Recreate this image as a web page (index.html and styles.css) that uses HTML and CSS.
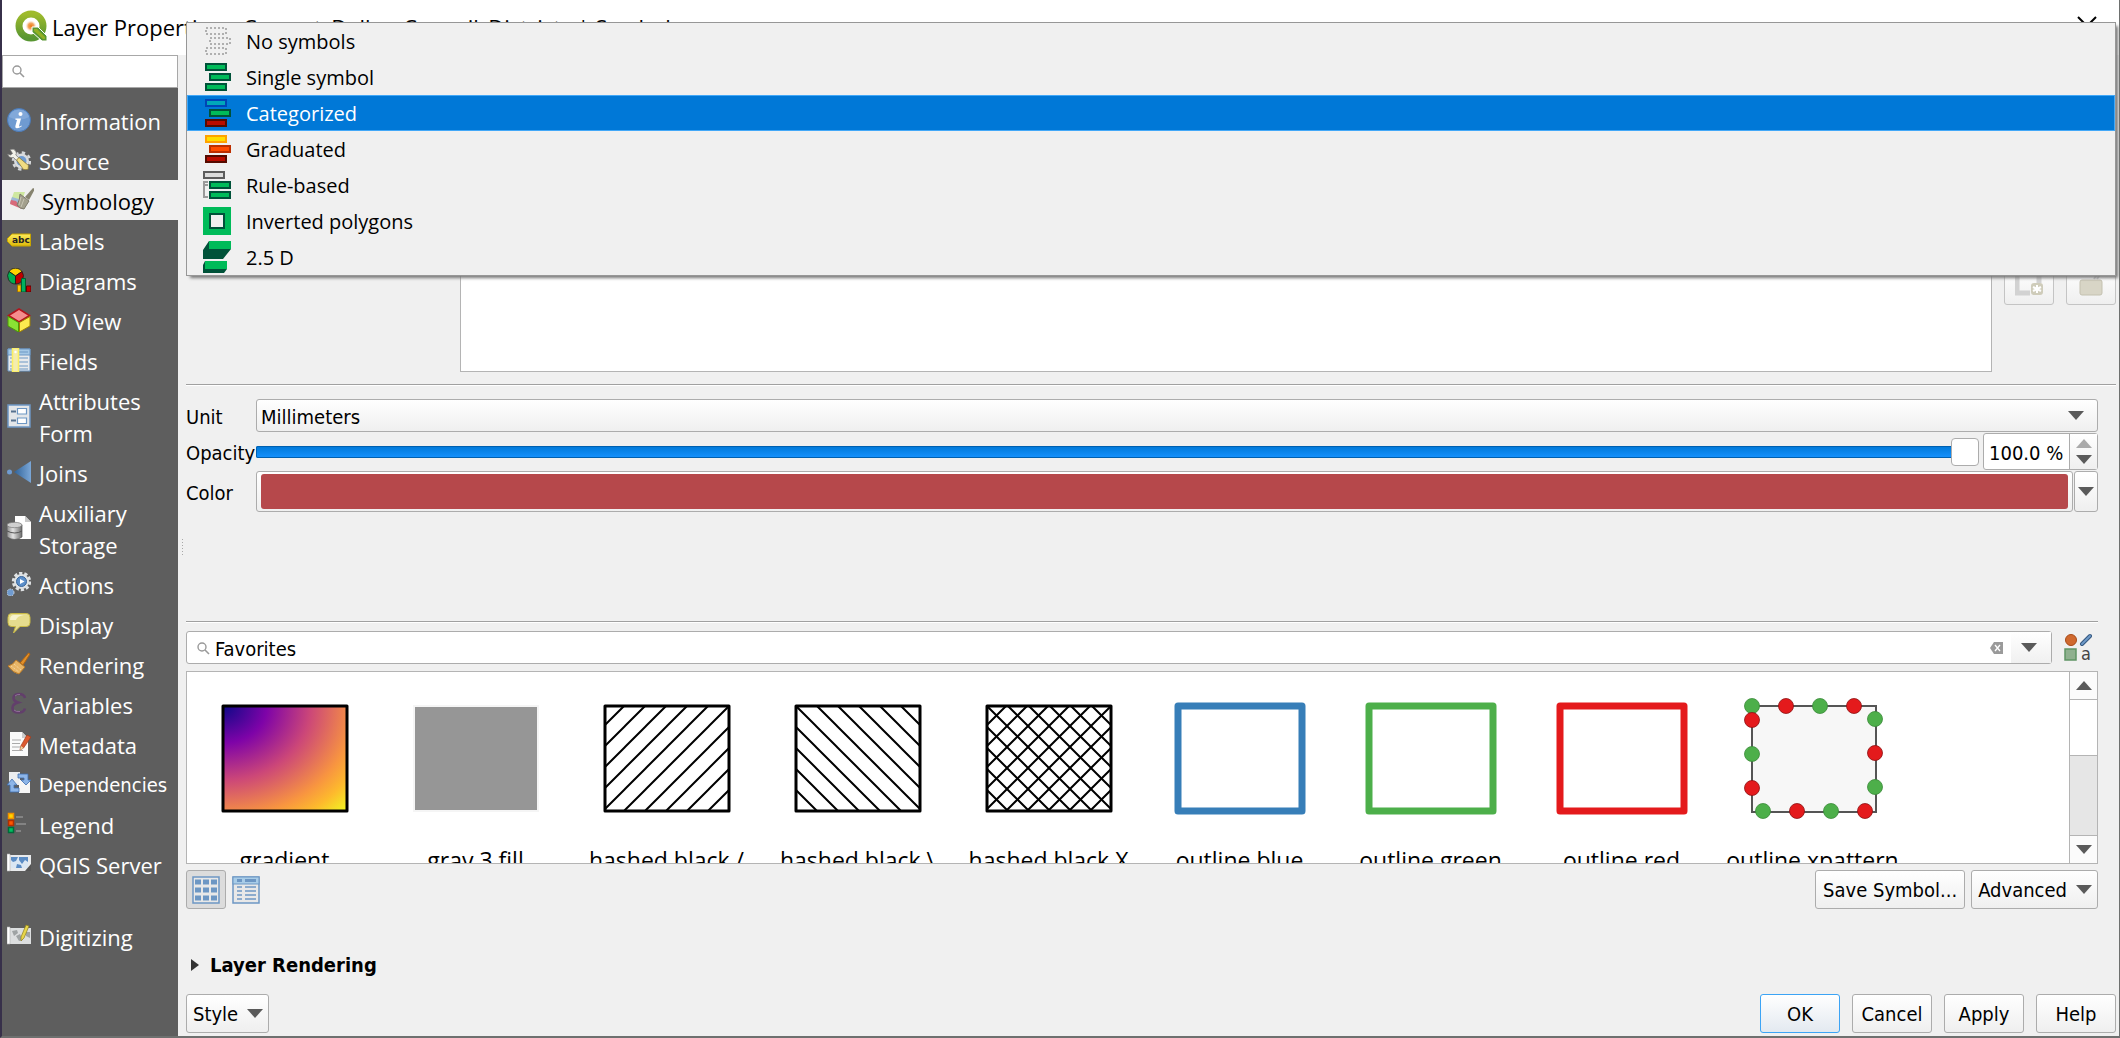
FILE: index.html
```html
<!DOCTYPE html>
<html lang="en">
<head>
<meta charset="utf-8">
<title>Layer Properties</title>
<link rel="stylesheet" href="styles.css">
</head>
<body>
<div class="dialog">
  <header class="titlebar">
    <svg class="logo" width="32" height="32" viewBox="0 0 32 32" aria-hidden="true">
      <defs>
        <linearGradient id="ring" x1="0" y1="0" x2="0" y2="1"><stop offset="0" stop-color="#9fbb2c"/><stop offset="1" stop-color="#589632"/></linearGradient>
        <radialGradient id="core"><stop offset="0" stop-color="#ee7913"/><stop offset="0.5" stop-color="#f3a763"/><stop offset="1" stop-color="#fff" stop-opacity="0"/></radialGradient>
      </defs>
      <circle cx="16" cy="16" r="12" fill="none" stroke="url(#ring)" stroke-width="7"/>
      <circle cx="16" cy="16" r="6" fill="url(#core)"/>
      <path d="M17 17h6l9 9v5h-5L17 22z" fill="#589632" stroke="#fff" stroke-width="1"/>
      <path d="M19 19h3l8 8v2h-2l-9-8z" fill="#93b023"/>
    </svg>
    <h1 class="title">Layer Properties – Current_Dallas_Council_Districts | Symbology</h1>
    <button class="close" type="button" aria-label="Close"><svg width="20" height="20" viewBox="0 0 20 20"><path d="M1 1l18 18M19 1L1 19" stroke="#000" stroke-width="2"/></svg></button>
  </header>

  <div class="body">
    <aside class="sidebar">
      <div class="search">
        <svg width="14" height="14" viewBox="0 0 14 14" aria-hidden="true"><circle cx="6" cy="6" r="4" fill="none" stroke="#999" stroke-width="1.4"/><path d="M9 9l4 4" stroke="#999" stroke-width="1.6"/></svg>
        <input type="text" aria-label="Search options">
      </div>
      <nav class="nav">
        <a href="#information"><svg class="ico" viewBox="0 0 24 24"><circle cx="12" cy="12" r="11.5" fill="#6f9bd1" stroke="#4a7ab8"/><path d="M2 9a10.500 10.500 0 0 1 20 0q-9 5-20 0z" fill="#8fb3df" opacity=".6"/><circle cx="13.500" cy="6" r="2" fill="#fff"/><path d="M8.500 10.500h5.500l-2 7.500q0 1 2.500-.5l.3.8q-3 2.200-5 2-2-.3-1.300-2.800l1.500-5.500-1.800-.4z" fill="#fff"/></svg><span>Information</span></a>
        <a href="#source"><svg class="ico" viewBox="0 0 24 24"><circle cx="14.500" cy="13" r="8.500" fill="none" stroke="#d5d8da" stroke-width="2.500" stroke-dasharray="3.340 3.340"/><circle cx="14.500" cy="13" r="7.500" fill="#dadcde"/><circle cx="14.500" cy="13" r="5" fill="#6f9bd1"/><path d="M3 1.500q4-1.500 6 2 .8 2-.2 3.500L12 10l-2.500 2.500L6.500 9.500Q2 10.500.5 6l3 1 2-1.500z" fill="#f2f2ea" stroke="#707070" stroke-width=".7"/><path d="M9.500 12L12 9.500l9.500 8-.5 4-4.500 0z" fill="#f0dc82" stroke="#8a7a3a" stroke-width=".8"/></svg><span>Source</span></a>
        <a class="selected" href="#symbology" aria-current="page"><svg class="ico" viewBox="0 0 24 24"><path d="M4 4h11l-5 15-10-4z" fill="#cfe8a0"/><path d="M2 9l10 3-2 7-10-4z" fill="#9db9d6"/><path d="M1 12l5 1 6 8-12-5z" fill="#d86a7a"/><path d="M10 6l9 7-5 8q-4 0-7-4 3-5 3-11z" fill="#a3a08d" stroke="#7e7b6b"/><path d="M15 9l8-9 2 1-6 11z" fill="#86836f"/><path d="M11 9l-2 8M14 11l-3 8" stroke="#c8c5b4"/></svg><span>Symbology</span></a>
        <a href="#labels"><svg class="ico" viewBox="0 0 24 24"><defs><linearGradient id="tag" x1="0" y1="0" x2="0" y2="1"><stop offset="0" stop-color="#fdec5c"/><stop offset="1" stop-color="#dcb90a"/></linearGradient></defs><path d="M5 6h18.500v12H5L.5 13.500v-3z" fill="url(#tag)" stroke="#c7a500"/><text class="tag-text" x="5" y="15">abc</text></svg><span>Labels</span></a>
        <a href="#diagrams"><svg class="ico" viewBox="0 0 24 24"><g stroke="#1c1c1c" stroke-width=".8"><path d="M8.500 8L2 3.500A8 8 0 0 1 15 3.500z" fill="#ffd400"/><path d="M8.500 8L2 3.500A8 8 0 0 0 8.500 16z" fill="#00b050"/><path d="M8.500 8L15 3.500A8 8 0 0 1 8.500 16z" fill="#c00000"/></g><path d="M10.500 17h3.500v7h-3.500z" fill="#ffc800" stroke="#a07000"/><path d="M14.500 10.500h4V24h-4z" fill="#00b060" stroke="#006030"/><path d="M19.500 18H24v6h-4.500z" fill="#c00000" stroke="#600000"/></svg><span>Diagrams</span></a>
        <a href="#view3d"><svg class="ico" viewBox="0 0 24 24"><path d="M12 1l10.500 6.500L12 14 1.500 7.500z" fill="#f58d8d" stroke="#b2141c" stroke-width="1.500"/><path d="M1 8.500l10.500 6V24L1 18z" fill="#8ae234" stroke="#4e9a06"/><path d="M23 8.500l-10.500 6V24L23 18z" fill="#fce94f" stroke="#a08000"/></svg><span>3D View</span></a>
        <a href="#fields"><svg class="ico" viewBox="0 0 24 24"><path d="M1 1h22v22H1z" fill="#e8eaec" stroke="#6d97c4"/><path d="M1 1h22v6H1z" fill="#a4c8e6" stroke="#6d97c4"/><path d="M12 4h9M3 10h3m6 0h9M3 14h3m6 0h9M3 18h3m6 0h9M3 21h3m6 0h9" stroke="#6d97c4" stroke-width="1.200"/><path d="M5.500 0h6v24h-6z" fill="#f4edae" stroke="#fcf060" stroke-width="1.500"/><circle cx="8.500" cy="4" r="1.200" fill="#fff"/></svg><span>Fields</span></a>
        <a href="#attributes"><svg class="ico" viewBox="0 0 24 24"><path d="M1 1h22v22H1z" fill="#e3e6e9" stroke="#6d97c4" stroke-width="1.500"/><path d="M4 7.500h5M4 16.500h5" stroke="#56718f" stroke-width="2"/><path d="M10.500 4.500h9v5.500h-9zM10.500 14h9v5.500h-9z" fill="#fff" stroke="#6d97c4" stroke-width="1.200"/></svg><span>Attributes Form</span></a>
        <a href="#joins"><svg class="ico" viewBox="0 0 24 24"><defs><linearGradient id="join"><stop offset="0" stop-color="#2f6298"/><stop offset="1" stop-color="#7ba7d7"/></linearGradient></defs><circle cx="2.500" cy="12" r="2.500" fill="#6f9bd1"/><path d="M7 12L24 1v22z" fill="url(#join)"/></svg><span>Joins</span></a>
        <a href="#auxiliary"><svg class="ico" viewBox="0 0 24 24"><defs><linearGradient id="drum"><stop offset="0" stop-color="#8b8b8b"/><stop offset=".4" stop-color="#e4e4e4"/><stop offset="1" stop-color="#6c6c6c"/></linearGradient></defs><path d="M8 0h10l6 6v17H8z" fill="#fff"/><path d="M18 0l6 6h-6z" fill="#c8c8c8"/><path d="M0 9v12q8 5 15 0V9z" fill="url(#drum)" stroke="#555" stroke-width=".7"/><path d="M0 15q8 4 15 0" fill="none" stroke="#555"/><ellipse cx="7.500" cy="9" rx="7.500" ry="2.700" fill="#d0d0d0" stroke="#777" stroke-width=".7"/></svg><span>Auxiliary Storage</span></a>
        <a href="#actions"><svg class="ico" viewBox="0 0 24 24"><circle cx="14.500" cy="9.500" r="8.200" fill="none" stroke="#dfe2e4" stroke-width="3" stroke-dasharray="3.200 1.950"/><circle cx="14.500" cy="9.500" r="7.500" fill="#dfe2e4"/><circle cx="14.500" cy="9.500" r="5" fill="#5c8fca" stroke="#38659a"/><path d="M13 7l4.500 2.500L13 12z" fill="#fff"/><circle cx="3.500" cy="20.500" r="3.500" fill="#6f9bd1" stroke="#d0d6dc" stroke-dasharray="1.500 1"/></svg><span>Actions</span></a>
        <a href="#display"><svg class="ico" viewBox="0 0 24 24"><path d="M4.500 1.500h15q3.500 0 3.500 4v5q0 4-3.500 4H13L6.500 21l2-6.500h-4q-3.500 0-3.500-4v-5q0-4 3.500-4z" fill="#e6dd8e" stroke="#c9ba45"/><path d="M3 8q0-5 4-5h10q-7 1-8 5z" fill="#f6f2cc"/></svg><span>Display</span></a>
        <a href="#rendering"><svg class="ico" viewBox="0 0 24 24"><path d="M13 11L21.500 1l1.500 1-7 11z" fill="#e0902a" stroke="#b4640e"/><path d="M9 8l9 7-6 7q-6-1-11-8 5-1 8-6z" fill="#e8b566" stroke="#b97a28"/><path d="M4 14l8 6M7 12l7 6" stroke="#f7dcae" stroke-dasharray="1 1"/></svg><span>Rendering</span></a>
        <a href="#variables"><svg class="ico" viewBox="0 0 24 24"><path d="M18 6q-1-4-6-4-5.500 0-5.500 4 0 3 4.500 4.500Q5.500 12 5.500 16q0 4.500 6 4.500 5.500 0 6.500-4" fill="none" stroke="#623f6b" stroke-width="2.600"/><path d="M8 4q2-2 5-1.500M7 18q2 2 6 1.500" fill="none" stroke="#9a7aa3" stroke-width=".8"/></svg><span>Variables</span></a>
        <a href="#metadata"><svg class="ico" viewBox="0 0 24 24"><path d="M3 0h12l6 6v18H3z" fill="#fafafa"/><path d="M15 0l6 6h-6z" fill="#ccc"/><path d="M5 8h9M5 11.500h8M5 15h8M5 18.500h11" stroke="#aaa" stroke-width="1.200"/><path d="M20 3l4 2-7.500 11-3.500 2 .8-4z" fill="#dc5a30" stroke="#a33a18" stroke-width=".7"/><path d="M14 14l2.500 2-3.500 2z" fill="#e8d6a0"/></svg><span>Metadata</span></a>
        <a class="compact" href="#dependencies"><svg class="ico" viewBox="0 0 24 24"><path d="M2 0h11v13H2z" fill="#eceef0"/><path d="M12 8h11v13H12z" fill="#f6f6f6"/><path d="M11 2h10v6h3l-5 5-5-5h3V6h-6z" fill="#8db5e8" stroke="#3f6fb0" stroke-width=".8"/><path d="M12 20H3v-7H0l5-6 5 6H7v3h5z" fill="#8db5e8" stroke="#3f6fb0" stroke-width=".8"/></svg><span>Dependencies</span></a>
        <a href="#legend"><svg class="ico" viewBox="0 0 24 24"><path d="M1.500 1.500h5v5h-5z" fill="#ffd400" stroke="#f09000" stroke-width="1.500"/><path d="M1.500 8.500h5v5h-5z" fill="#ff5500" stroke="#b03000" stroke-width="1.500"/><path d="M1.500 15.500h5v5h-5z" fill="#00c060" stroke="#006a3a" stroke-width="1.500"/><path d="M9 5h7M9 12h10M9 19h5" stroke="#909090" stroke-width="1.600"/></svg><span>Legend</span></a>
        <a href="#server"><svg class="ico" viewBox="0 0 24 24"><path d="M1 3h23v16H1z" fill="#e8eaec"/><path d="M0 2h3v17H0z" fill="#fff" stroke="#b0b0b0" stroke-width=".6"/><path d="M4 5h17v11H4z" fill="#dbe7f3"/><path d="M4 5h7l-2 4-3 1-2-2zM12 5h9v5l-3-2-3 4-3-4zM10 12l4 1 1 3h-6z" fill="#5b8cc4"/><path d="M24 12l-6 7h6z" fill="#555"/></svg><span>QGIS Server</span></a>
        <a class="apart" href="#digitizing"><svg class="ico" viewBox="0 0 24 24"><path d="M1 4h23v16H1z" fill="#dcdedf"/><path d="M0 3h3v17H0z" fill="#fff" stroke="#b0b0b0" stroke-width=".6"/><path d="M5 7l5-1 1 3-4 3zM9 12l4-2 3 6-4 1zM19 8h4v6l-4-2z" fill="#9fa3a4"/><path d="M19 1l3 1-5 12-3 3V13z" fill="#e8d64a" stroke="#8b7d1c" stroke-width=".7"/></svg><span>Digitizing</span></a>
      </nav>
    </aside>

    <main class="main">
      <section class="layers">
        <div class="tree" role="tree" aria-label="Symbol layers"></div>
        <button class="btn tool" type="button" disabled aria-label="Save style"><svg width="28" height="28" viewBox="0 0 28 28"><path d="M2 0v22h13M24 0v12" fill="none" stroke="#d2d2d2" stroke-width="5"/><rect x="16" y="12" width="12" height="12" rx="3" fill="#cfccba"/><path d="M22 14v8M18 16l8 4M26 16l-8 4" stroke="#fff" stroke-width="2"/></svg></button>
        <button class="btn tool" type="button" disabled aria-label="Open style"><svg width="28" height="28" viewBox="0 0 28 28"><path d="M17 8l4-6M20 8l4-6" stroke="#c8c8c8" stroke-width="2"/><rect x="3" y="9" width="22" height="15" rx="2" fill="#d8d5c6" stroke="#c4c1b0"/></svg></button>
      </section>

      <hr class="rule">

      <section class="form">
        <label for="unit">Unit</label>
        <div class="combo">
          <select class="btn" id="unit"><option>Millimeters</option></select>
          <svg class="arrow" width="16" height="9" viewBox="0 0 16 9" aria-hidden="true"><path d="M0 0h16L8 9z"/></svg>
        </div>
        <label for="opacity">Opacity</label>
        <div class="opacity">
          <input class="slider" id="opacity" type="range" min="0" max="100" value="100">
          <div class="spin">
            <input type="text" value="100.0 %" aria-label="Opacity value">
            <div class="steps">
              <button type="button" aria-label="Increase" disabled><svg width="16" height="9" viewBox="0 0 16 9"><path d="M0 9h16L8 0z"/></svg></button>
              <button type="button" aria-label="Decrease"><svg width="16" height="9" viewBox="0 0 16 9"><path d="M0 0h16L8 9z"/></svg></button>
            </div>
          </div>
        </div>
        <label for="color">Color</label>
        <div class="color">
          <button class="btn swatch" id="color" type="button" aria-label="Color"><span></span></button>
          <button class="btn drop" type="button" aria-label="Color options"><svg width="16" height="9" viewBox="0 0 16 9"><path d="M0 0h16L8 9z"/></svg></button>
        </div>
      </section>

      <div class="grip"></div>
      <hr class="rule inset">

      <section class="browser">
        <div class="filter">
          <div class="filter-box">
            <svg width="14" height="14" viewBox="0 0 14 14" aria-hidden="true"><circle cx="6" cy="6" r="4" fill="none" stroke="#999" stroke-width="1.4"/><path d="M9 9l4 4" stroke="#999" stroke-width="1.6"/></svg>
            <input type="text" value="Favorites" aria-label="Filter symbols">
            <button class="clear" type="button" aria-label="Clear"><svg width="13" height="12" viewBox="0 0 13 12"><path d="M4 0h9v12H4L0 6z" fill="#9a9a9a"/><path d="M5 3l5 6M10 3L5 9" stroke="#fff" stroke-width="1.300"/></svg></button>
            <button class="open" type="button" aria-label="Show groups"><svg width="16" height="9" viewBox="0 0 16 9"><path d="M0 0h16L8 9z"/></svg></button>
          </div>
          <button class="manager" type="button" aria-label="Style Manager"><svg width="28" height="30" viewBox="0 0 28 30"><circle cx="7" cy="7" r="5.500" fill="#d0692f" stroke="#a84a18"/><path d="M18 11l8-8" stroke="#34577f" stroke-width="4" stroke-linecap="round"/><path d="M18 11l8-8" stroke="#6e9ac8" stroke-width="2" stroke-linecap="round"/><rect x="1" y="16" width="11" height="11" fill="#8fb08f" stroke="#5f9464" stroke-width="1.500"/><text class="manager-text" x="17" y="27">a</text></svg></button>
        </div>

        <div class="gallery">
          <ul class="symbols">
            <li><svg width="140" height="124"><defs><radialGradient id="plasma" cx="0" cy="0" r="1.414" fx="0" fy="0"><stop offset="0" stop-color="#0d0887"/><stop offset=".25" stop-color="#7e03a8"/><stop offset=".5" stop-color="#cc4778"/><stop offset=".75" stop-color="#f89540"/><stop offset=".86" stop-color="#fdb92d"/><stop offset="1" stop-color="#f0f921"/></radialGradient></defs><rect x="8" y="9" width="124" height="105" fill="url(#plasma)" stroke="#000" stroke-width="3" stroke-linejoin="round"/></svg><span>gradient</span></li>
            <li><svg width="140" height="124"><rect x="8" y="9" width="124" height="105" fill="#969696" stroke="#f5f5f5" stroke-width="2"/></svg><span>gray 3 fill</span></li>
            <li><svg width="140" height="124"><defs><pattern id="fwd" x="7" y="8" width="21" height="21" patternUnits="userSpaceOnUse"><path d="M-1 22L22-1M-1 1L1-1M20 22L22 20" stroke="#000" stroke-width="2"/></pattern></defs><rect x="8" y="9" width="124" height="105" fill="url(#fwd)" stroke="#000" stroke-width="3" stroke-linejoin="round"/></svg><span>hashed black /</span></li>
            <li><svg width="140" height="124"><defs><pattern id="back" x="7" y="8" width="21" height="21" patternUnits="userSpaceOnUse"><path d="M-1-1L22 22M-1 20L1 22M20-1L22 1" stroke="#000" stroke-width="2"/></pattern></defs><rect x="8" y="9" width="124" height="105" fill="url(#back)" stroke="#000" stroke-width="3" stroke-linejoin="round"/></svg><span>hashed black \</span></li>
            <li><svg width="140" height="124"><rect x="8" y="9" width="124" height="105" fill="url(#fwd)"/><rect x="8" y="9" width="124" height="105" fill="url(#back)" stroke="#000" stroke-width="3" stroke-linejoin="round"/></svg><span>hashed black X</span></li>
            <li><svg width="140" height="124"><rect x="8" y="9" width="124" height="105" fill="none" stroke="#377eb8" stroke-width="7" stroke-linejoin="round"/></svg><span>outline blue</span></li>
            <li><svg width="140" height="124"><rect x="8" y="9" width="124" height="105" fill="none" stroke="#4daf4a" stroke-width="7" stroke-linejoin="round"/></svg><span>outline green</span></li>
            <li><svg width="140" height="124"><rect x="8" y="9" width="124" height="105" fill="none" stroke="#e41a1c" stroke-width="7" stroke-linejoin="round"/></svg><span>outline red</span></li>
            <li><svg width="140" height="124"><rect x="9" y="9" width="124" height="106" fill="#f7f7f7" stroke="#555" stroke-width="2"/>
              <g fill="#4daf4a" stroke="#3a8a38" stroke-width=".8"><circle cx="9" cy="9" r="7.500"/><circle cx="77" cy="9" r="7.500"/><circle cx="132" cy="22" r="7.500"/><circle cx="132" cy="90" r="7.500"/><circle cx="9" cy="57" r="7.500"/><circle cx="20" cy="114" r="7.500"/><circle cx="88" cy="114" r="7.500"/></g>
              <g fill="#e41a1c" stroke="#8c1012" stroke-width=".8"><circle cx="43" cy="9" r="7.500"/><circle cx="111" cy="9" r="7.500"/><circle cx="9" cy="23" r="7.500"/><circle cx="9" cy="91" r="7.500"/><circle cx="132" cy="56" r="7.500"/><circle cx="54" cy="114" r="7.500"/><circle cx="122" cy="114" r="7.500"/></g></svg><span>outline xpattern</span></li>
          </ul>
          <div class="scrollbar">
            <button type="button" aria-label="Scroll up"><svg width="16" height="9" viewBox="0 0 16 9"><path d="M0 9h16L8 0z"/></svg></button>
            <div class="thumb"></div>
            <div class="track"></div>
            <button type="button" aria-label="Scroll down"><svg width="16" height="9" viewBox="0 0 16 9"><path d="M0 0h16L8 9z"/></svg></button>
          </div>
        </div>

        <div class="actions">
          <button class="btn view on" type="button" aria-label="Icon view" aria-pressed="true"><svg width="28" height="28" viewBox="0 0 28 28"><rect x="1" y="1" width="26" height="26" fill="#e8e8e8" stroke="#6d97c4" stroke-width="1.500"/><path d="M6 3.500v21M14 3.500v21M22 3.500v21" stroke="#6d97c4" stroke-width="6" stroke-dasharray="5 3"/></svg></button>
          <button class="btn view" type="button" aria-label="List view" aria-pressed="false"><svg width="28" height="28" viewBox="0 0 28 28"><rect x="1" y="1" width="26" height="26" fill="#e8e8e8" stroke="#6d97c4" stroke-width="1.500"/><rect x="1" y="1" width="26" height="7" fill="#a9cde8" stroke="#6d97c4"/><path d="M5 4.500h5M13 4.500h11" stroke="#6d97c4" stroke-width="3"/><path d="M5 11h5M13 11h11M5 15h5M13 15h11M5 19h5M13 19h11M5 23h5M13 23h11" stroke="#6d97c4" stroke-width="1.500"/></svg></button>
          <button class="btn push" type="button">Save Symbol...</button>
          <button class="btn wide" type="button">Advanced <svg width="16" height="9" viewBox="0 0 16 9"><path d="M0 0h16L8 9z"/></svg></button>
        </div>
      </section>

      <h2 class="group"><svg width="8" height="12" viewBox="0 0 8 12" aria-hidden="true"><path d="M0 0l8 6-8 6z"/></svg>Layer Rendering</h2>

      <footer class="footer">
        <button class="btn wide" type="button">Style <svg width="16" height="9" viewBox="0 0 16 9"><path d="M0 0h16L8 9z"/></svg></button>
        <div class="confirm">
          <button class="btn default" type="button">OK</button>
          <button class="btn" type="button">Cancel</button>
          <button class="btn" type="button">Apply</button>
          <button class="btn" type="button">Help</button>
        </div>
      </footer>
    </main>
  </div>

  <ul class="menu" role="listbox" aria-label="Renderer">
    <li role="option"><svg width="28" height="28" viewBox="0 0 28 28"><g fill="none" stroke="#b0b0b0" stroke-width="2" stroke-dasharray="2 2"><path d="M3 1h20v6H3zM7 11h20v6H7zM3 21h20v6H3z"/></g></svg>No symbols</li>
    <li role="option"><svg width="28" height="28" viewBox="0 0 28 28"><path d="M3 1h20v6H3zM7 11h20v6H7zM3 21h20v6H3z" fill="#00bb59" stroke="#005239" stroke-width="2"/></svg>Single symbol</li>
    <li role="option" class="active" aria-selected="true"><svg width="28" height="28" viewBox="0 0 28 28"><g stroke-width="2"><path d="M3 1h20v6H3z" fill="#00a8ba" stroke="#0045b4"/><path d="M7 11h20v6H7z" fill="#00bb59" stroke="#005239"/><path d="M3 21h20v6H3z" fill="#b90c00" stroke="#560b00"/></g></svg>Categorized</li>
    <li role="option"><svg width="28" height="28" viewBox="0 0 28 28"><g stroke-width="2"><path d="M3 1h20v6H3z" fill="#ffdd00" stroke="#ffa200"/><path d="M7 11h20v6H7z" fill="#ff4a00" stroke="#bd2f00"/><path d="M3 21h20v6H3z" fill="#b90c00" stroke="#560b00"/></g></svg>Graduated</li>
    <li role="option"><svg width="28" height="28" viewBox="0 0 28 28"><g stroke-width="2"><path d="M1 1h20v6H1z" fill="#dcdcdc" stroke="#5c5c5c"/><path d="M5 11H1v15h4M1 14h4" fill="none" stroke="#9a9a9a"/><path d="M7 11h20v6H7zM7 21h20v6H7z" fill="#00bb59" stroke="#005239"/></g></svg>Rule-based</li>
    <li role="option"><svg width="28" height="28" viewBox="0 0 28 28"><path d="M0 0h28v28H0z" fill="#00bb59"/><path d="M7 7h14v14H7z" fill="#f0f0f0" stroke="#005239" stroke-width="2"/></svg>Inverted polygons</li>
    <li role="option"><svg width="28" height="32" viewBox="0 0 28 32"><path d="M6 0h22v8l-8 10H0V9zM2 20h22v8l-3 4H0v-8z" fill="#005239"/><path d="M6 0h22v8H6zM2 20h22v8H2z" fill="#00bb59"/></svg>2.5 D</li>
  </ul>
</div>
</body>
</html>
```
FILE: styles.css
```css
* {
  box-sizing: border-box;
}

body {
  margin: 0;
  background: #6e706f;
  color: #000;
  font: 20px/24px "DejaVu Sans Condensed", "DejaVu Sans", sans-serif;
}

button,
input,
select {
  margin: 0;
  padding: 0;
  border: 0;
  background: none;
  color: inherit;
  font: inherit;
}

svg {
  flex: none;
  fill: #5a5a5a;
}

ul {
  margin: 0;
  padding: 0;
  list-style: none;
}

.dialog {
  position: relative;
  display: flex;
  flex-direction: column;
  min-height: 100vh;
  border: solid #6e706f;
  border-width: 0 1px 2px 2px;
  border-left-color: #37304a;
  background: #f0f0f0;
}

/* Title bar */

.titlebar {
  display: flex;
  align-items: center;
  height: 55px;
  padding: 0 22px 3px 13px;
  background: #fff;
}

.title {
  flex: 1;
  margin: 2px 0 0 5px;
  font: 22px/32px "Open Sans", sans-serif;
}

.close {
  display: flex;
}

.body {
  display: flex;
  flex: 1;
}

/* Sidebar */

.sidebar {
  flex: none;
  width: 176px;
  background: #5e5e5e;
}

.search {
  display: flex;
  align-items: center;
  gap: 4px;
  height: 33px;
  padding: 0 8px 2px;
  border: 1px solid #a8a8a8;
  background: #fff;
}

.search input {
  flex: 1;
  min-width: 0;
}

.nav {
  display: flex;
  flex-direction: column;
  padding-top: 12px;
}

.nav a {
  display: flex;
  align-items: center;
  gap: 8px;
  padding: 5px 0 3px 5px;
  color: #fff;
  font: 22px/32px "Open Sans", sans-serif;
  text-decoration: none;
}

.nav a.selected {
  padding-left: 8px;
  background: #f0f0f0;
  color: #000;
}

.nav a.compact {
  font: 20px/32px "DejaVu Sans Condensed", "DejaVu Sans", sans-serif;
}

.nav a.apart {
  margin-top: 32px;
}

.ico {
  width: 24px;
  height: 24px;
  margin-bottom: 2px;
}

.tag-text {
  fill: #222;
  font: bold 9px "DejaVu Sans", sans-serif;
}

/* Shared controls */

.btn {
  display: flex;
  align-items: center;
  justify-content: center;
  gap: 6px;
  height: 39px;
  padding: 0 5px;
  border: 1px solid #acacac;
  border-radius: 3px;
  background: linear-gradient(#fff, #efefef);
}

.btn.wide {
  gap: 9px;
  padding: 0 5px 0 6px;
}

.rule {
  width: 100%;
  height: 2px;
  margin: 12px 0 0;
  border: solid;
  border-width: 1px 0;
  border-color: #a0a0a0 transparent #fff;
}

.rule.inset {
  width: auto;
  margin: 65px 18px 0 0;
}

/* Main pane */

.main {
  display: flex;
  flex: 1;
  flex-direction: column;
  min-width: 0;
  padding: 95px 3px 3px 8px;
}

.layers {
  display: flex;
  align-items: center;
  gap: 12px;
  padding-left: 274px;
}

.tree {
  flex: 1;
  height: 222px;
  border: 1px solid #b4b4b4;
  background: #fff;
}

.btn.tool {
  width: 50px;
  margin-top: 48px;
  border-color: #c4c4c4;
}

.form {
  display: grid;
  grid-template-columns: 70px 1fr;
  row-gap: 1px;
  align-items: center;
  margin: 13px 18px 0 0;
}

.form label {
  padding-top: 2px;
}

.combo {
  display: grid;
  grid-template-columns: 1fr auto;
  align-items: center;
}

.combo select {
  grid-area: 1 / 1 / 2 / 3;
  width: 100%;
  height: 33px;
  padding: 2px 4px 0;
  appearance: none;
}

.combo .arrow {
  grid-area: 1 / 2;
  margin-right: 14px;
  pointer-events: none;
}

.opacity {
  display: flex;
  align-items: center;
  gap: 4px;
}

.slider {
  flex: 1;
  height: 28px;
  appearance: none;
}

.slider::-webkit-slider-runnable-track {
  height: 12px;
  border-radius: 2px;
  background: linear-gradient(#0078d7, #1692ff);
  box-shadow: inset 0 0 0 1px #0060b0;
}

.slider::-webkit-slider-thumb {
  width: 28px;
  height: 28px;
  margin-top: -8px;
  border: 1px solid #acacac;
  border-radius: 4px;
  background: #fff;
  appearance: none;
}

.spin {
  display: flex;
  width: 115px;
  height: 37px;
  border: 1px solid #acacac;
  border-radius: 3px;
  background: #fff;
}

.spin input {
  flex: 1;
  min-width: 0;
  padding: 2px 0 0 5px;
}

.steps {
  display: flex;
  flex-direction: column;
  justify-content: center;
  gap: 7px;
  width: 28px;
  border-left: 1px solid #acacac;
  background: linear-gradient(#fff, #efefef);
}

.steps button {
  display: flex;
  justify-content: center;
}

.steps button:disabled svg {
  fill: #aaa;
}

.color {
  display: flex;
  gap: 1px;
}

.btn.swatch {
  flex: 1;
  height: 41px;
  padding: 2px 4px;
}

.swatch span {
  flex: 1;
  height: 35px;
  border-radius: 3px;
  background: #b6484b;
}

.btn.drop {
  width: 24px;
  height: 41px;
  padding: 0;
}

.grip {
  width: 1px;
  height: 17px;
  margin: 27px 0 0 -4px;
  background: repeating-linear-gradient(#a8a8a8 0 1px, transparent 1px 3px);
}

/* Symbol browser */

.browser {
  margin: 8px 18px 0 0;
}

.filter {
  display: flex;
  align-items: center;
  gap: 12px;
}

.filter-box {
  display: flex;
  flex: 1;
  align-items: center;
  height: 33px;
  padding-left: 9px;
  border: 1px solid #acacac;
  border-radius: 3px;
  background: #fff;
}

.filter-box input {
  flex: 1;
  min-width: 0;
  padding: 2px 0 0 5px;
}

.clear {
  display: flex;
  margin-right: 8px;
}

.open {
  display: flex;
  align-items: center;
  justify-content: center;
  width: 40px;
  height: 100%;
  padding-right: 4px;
  background: linear-gradient(#fff, #f0f0f0);
}

.manager {
  display: flex;
  width: 34px;
}

.manager-text {
  fill: #444;
  font: 18px "DejaVu Sans Condensed", "DejaVu Sans", sans-serif;
}

.gallery {
  display: flex;
  height: 193px;
  margin-top: 7px;
  border: 1px solid #b4b4b4;
  background: #fff;
}

.symbols {
  display: flex;
  flex: 1;
  flex-wrap: wrap;
  overflow: hidden;
  padding: 25px 0 0 2px;
}

.symbols li {
  display: flex;
  flex-direction: column;
  align-items: center;
  gap: 23px;
  width: 191px;
  font: 23px/32px "Open Sans", sans-serif;
  white-space: nowrap;
}

.scrollbar {
  display: flex;
  flex-direction: column;
  width: 28px;
  border-left: 1px solid #b4b4b4;
  background: #e6e6e6;
}

.scrollbar button {
  display: flex;
  align-items: center;
  justify-content: center;
  height: 27px;
  background: #fbfbfb;
}

.thumb {
  height: 57px;
  border: solid #b4b4b4;
  border-width: 1px 0;
  background: #fff;
}

.track {
  flex: 1;
  border-bottom: 1px solid #b4b4b4;
}

.actions {
  display: flex;
  gap: 6px;
  margin-top: 6px;
}

.btn.view {
  width: 40px;
  padding: 0;
  border-color: transparent;
  background: none;
}

.btn.view.on {
  margin-right: -6px;
  border-color: #acacac;
  background: #dcdcdc;
}

.push {
  margin-left: auto;
}

.actions .btn.push {
  padding: 0 7px;
}

.group {
  display: flex;
  align-items: center;
  gap: 11px;
  margin: auto 0 17px;
  padding-left: 5px;
  font-size: 20px;
  line-height: 24px;
}

.group svg {
  fill: #333;
}

.footer,
.confirm {
  display: flex;
  justify-content: space-between;
  gap: 12px;
}

.confirm .btn {
  width: 80px;
}

.btn.default {
  border-color: #3ca4f5;
  background: linear-gradient(#fff, #e3e9f0);
}

/* Renderer menu, open over the dialog */

.menu {
  position: absolute;
  top: 22px;
  right: 3px;
  left: 184px;
  border: 1px solid #979797;
  background: #f0f0f0;
  box-shadow: 3px 3px 3px -1px #777;
  font: 20px/32px "Open Sans", sans-serif;
}

.menu li {
  display: flex;
  align-items: center;
  gap: 15px;
  height: 36px;
  padding: 2px 0 0 16px;
}

.menu svg {
  margin-bottom: 2px;
}

.menu li.active {
  background: #0078d7;
  box-shadow: inset 0 0 0 1px #42a8f8;
  color: #fff;
}
```
